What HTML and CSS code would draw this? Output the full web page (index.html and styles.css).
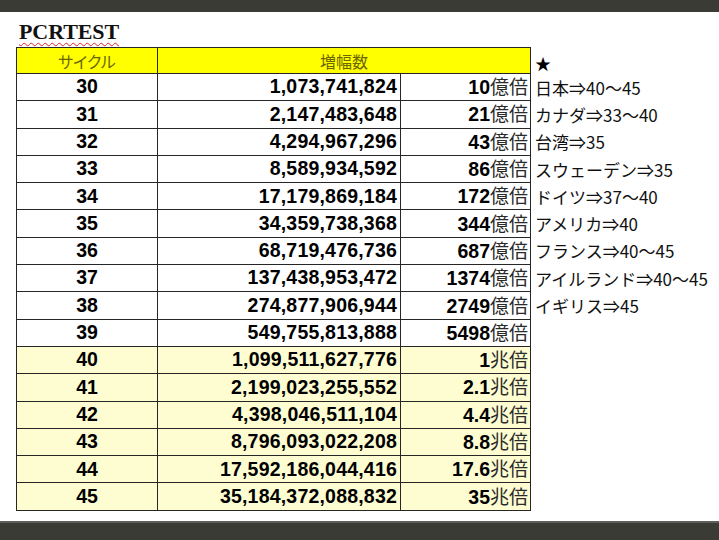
FILE: index.html
```html
<!DOCTYPE html>
<html lang="ja">
<head>
<meta charset="utf-8">
<title>PCRTEST</title>
<link rel="stylesheet" href="styles.css">
</head>
<body>
<div class="topbar"></div>
<main class="sheet">
  <h1 class="title">PCRTEST</h1>
  <table class="grid">
    <colgroup>
      <col class="c-cycle">
      <col class="c-amp">
      <col class="c-unit">
      <col class="c-note">
    </colgroup>
    <thead>
      <tr class="head">
        <th class="h-cycle">サイクル</th>
        <th class="h-amp" colspan="2">増幅数</th>
        <th class="note star">★</th>
      </tr>
    </thead>
    <tbody>
      <tr><td class="cyc">30</td><td class="amp">1,073,741,824</td><td class="unit"><b>10</b><span>億倍</span></td><td class="note">日本⇒40〜45</td></tr>
      <tr><td class="cyc">31</td><td class="amp">2,147,483,648</td><td class="unit"><b>21</b><span>億倍</span></td><td class="note">カナダ⇒33〜40</td></tr>
      <tr><td class="cyc">32</td><td class="amp">4,294,967,296</td><td class="unit"><b>43</b><span>億倍</span></td><td class="note">台湾⇒35</td></tr>
      <tr><td class="cyc">33</td><td class="amp">8,589,934,592</td><td class="unit"><b>86</b><span>億倍</span></td><td class="note">スウェーデン⇒35</td></tr>
      <tr><td class="cyc">34</td><td class="amp">17,179,869,184</td><td class="unit"><b>172</b><span>億倍</span></td><td class="note">ドイツ⇒37〜40</td></tr>
      <tr><td class="cyc">35</td><td class="amp">34,359,738,368</td><td class="unit"><b>344</b><span>億倍</span></td><td class="note">アメリカ⇒40</td></tr>
      <tr><td class="cyc">36</td><td class="amp">68,719,476,736</td><td class="unit"><b>687</b><span>億倍</span></td><td class="note">フランス⇒40〜45</td></tr>
      <tr><td class="cyc">37</td><td class="amp">137,438,953,472</td><td class="unit"><b>1374</b><span>億倍</span></td><td class="note">アイルランド⇒40〜45</td></tr>
      <tr><td class="cyc">38</td><td class="amp">274,877,906,944</td><td class="unit"><b>2749</b><span>億倍</span></td><td class="note">イギリス⇒45</td></tr>
      <tr><td class="cyc">39</td><td class="amp">549,755,813,888</td><td class="unit"><b>5498</b><span>億倍</span></td><td class="note"></td></tr>
      <tr class="hl"><td class="cyc">40</td><td class="amp">1,099,511,627,776</td><td class="unit"><b>1</b><span>兆倍</span></td><td class="note"></td></tr>
      <tr class="hl"><td class="cyc">41</td><td class="amp">2,199,023,255,552</td><td class="unit"><b>2.1</b><span>兆倍</span></td><td class="note"></td></tr>
      <tr class="hl"><td class="cyc">42</td><td class="amp">4,398,046,511,104</td><td class="unit"><b>4.4</b><span>兆倍</span></td><td class="note"></td></tr>
      <tr class="hl"><td class="cyc">43</td><td class="amp">8,796,093,022,208</td><td class="unit"><b>8.8</b><span>兆倍</span></td><td class="note"></td></tr>
      <tr class="hl"><td class="cyc">44</td><td class="amp">17,592,186,044,416</td><td class="unit"><b>17.6</b><span>兆倍</span></td><td class="note"></td></tr>
      <tr class="hl"><td class="cyc">45</td><td class="amp">35,184,372,088,832</td><td class="unit"><b>35</b><span>兆倍</span></td><td class="note"></td></tr>
    </tbody>
  </table>
</main>
<div class="bottombar"></div>
</body>
</html>
```

FILE: styles.css
```css
html, body {
  margin: 0;
  padding: 0;
}
body {
  width: 719px;
  height: 540px;
  overflow: hidden;
  display: flex;
  flex-direction: column;
  background: #ffffff;
  font-family: "Liberation Sans", "Noto Sans CJK JP", sans-serif;
  color: #000;
}
.topbar {
  height: 12px;
  flex: none;
  background: #3b3b35;
}
.sheet {
  flex: 1;
  padding: 0 0 0 16px;
}
.title {
  margin: 0;
  padding: 9px 0 0 3px;
  height: 26px;
  box-sizing: content-box;
  font: bold 22px/1 "Liberation Serif", serif;
  color: #111;
  letter-spacing: -0.1px;
  text-decoration: underline wavy #d22;
  text-decoration-thickness: 1px;
  text-underline-offset: 3px;
}
.grid {
  border-collapse: collapse;
  table-layout: fixed;
  width: 703px;
}
.c-cycle { width: 141px; }
.c-amp { width: 243px; }
.c-unit { width: 130px; }
.c-note { width: 189px; }

.grid th, .grid td {
  padding: 0;
  border: 1px solid #262626;
  white-space: nowrap;
  overflow: visible;
}
.head th {
  height: 23px;
  background: #ffff00;
  color: #6b6600;
  font: normal 16px/1 "Noto Sans CJK JP", sans-serif;
  font-feature-settings: "palt";
  vertical-align: middle;
  text-align: center;
}
.grid tbody td {
  height: 26.3px;
  vertical-align: middle;
}
.cyc {
  text-align: center;
  font: bold 19.5px/1 "Liberation Sans", sans-serif;
}
.amp {
  text-align: right;
  padding-right: 3px !important;
  font: bold 19.5px/1 "Liberation Sans", sans-serif;
  letter-spacing: 0.2px;
}
.unit {
  text-align: right;
  padding-right: 2px !important;
}
.unit b {
  font: bold 19.5px/1 "Liberation Sans", sans-serif;
}
.unit span {
  font: normal 19px/1 "Noto Sans CJK JP", sans-serif;
  color: #2a2a2a;
}
.hl td.cyc, .hl td.amp, .hl td.unit {
  background: #fefdd2;
}
.grid .note {
  border: none;
  border-left: 1px solid #262626;
  background: transparent;
  text-align: left;
  padding-left: 4px;
  font: normal 17px/1 "Noto Sans CJK JP", sans-serif;
  color: #111;
}
.grid th.star {
  background: #fff;
  color: #000;
  font: normal 16px/1 "Noto Sans CJK JP", sans-serif;
  vertical-align: bottom;
  padding-left: 4px;
  padding-bottom: 3px;
  text-align: left;
}
.bottombar {
  height: 17px;
  flex: none;
  background: #3b3b35;
  border-top: 2px solid #5f5f59;
}
```
